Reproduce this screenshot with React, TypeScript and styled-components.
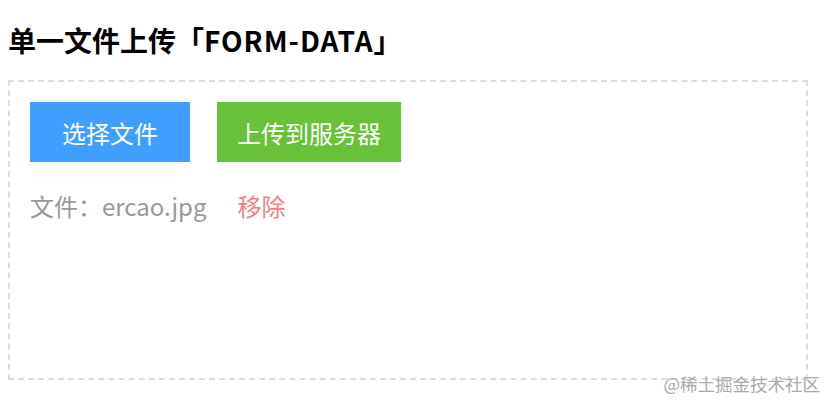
import React from 'react'
import styled, { createGlobalStyle } from 'styled-components'

const GlobalStyle = createGlobalStyle`
  body {
    margin: 8px;
    font-family: "Noto Sans CJK SC", "Noto Sans", sans-serif;
    background: #fff;
  }
`

const Page = styled.div`
  position: relative;
  display: flow-root;
  width: 818px;
  height: 394px;
`

const Title = styled.h2`
  margin: 16px 0 24px;
  font-size: 28px;
  line-height: 32px;
  font-weight: bold;
  color: #000;
`

const Latin = styled.span`
  letter-spacing: 1px;
`

const UploadBox = styled.div`
  box-sizing: border-box;
  width: 800px;
  height: 300px;
  border: 2px dashed #ddd;
  padding: 20px;
`

const Actions = styled.div`
  display: flex;
  gap: 27px;
`

const Button = styled.button<{ $color: string; $width: number }>`
  width: ${(p) => p.$width}px;
  height: 60px;
  padding: 0;
  border: none;
  background: ${(p) => p.$color};
  color: #fff;
  font-family: inherit;
  font-size: 24px;
  cursor: pointer;
`

const FileRow = styled.div`
  display: flex;
  gap: 31px;
  margin-top: 28px;
  font-size: 24px;
  line-height: 32px;
`

const FileName = styled.span`
  color: #999;
`

const Remove = styled.span`
  color: #f08080;
  cursor: pointer;
`

const Watermark = styled.div`
  position: absolute;
  right: 6px;
  bottom: 8px;
  font-size: 17.5px;
  line-height: 20px;
  color: #aaa;
`

export default function App() {
  return (
    <Page>
      <GlobalStyle />
      <Title>
        单一文件上传「<Latin>FORM-DATA</Latin>」
      </Title>
      <UploadBox>
        <Actions>
          <Button $color="#409eff" $width={160}>选择文件</Button>
          <Button $color="#67c23a" $width={184}>上传到服务器</Button>
        </Actions>
        <FileRow>
          <FileName>文件：ercao.jpg</FileName>
          <Remove>移除</Remove>
        </FileRow>
      </UploadBox>
      <Watermark>@稀土掘金技术社区</Watermark>
    </Page>
  )
}
